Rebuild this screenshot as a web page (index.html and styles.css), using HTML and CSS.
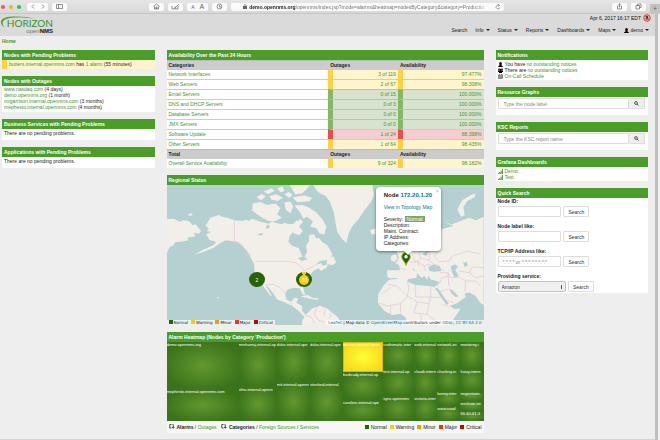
FILE: index.html
```html
<!DOCTYPE html>
<html lang="en">
<head>
<meta charset="utf-8">
<title>OpenNMS Horizon</title>
<link rel="stylesheet" href="styles.css">
</head>
<body>
<div class="browser">
  <span class="lights"><i class="light red"></i><i class="light amber"></i><i class="light lime"></i></span>
  <button class="tool wide" aria-label="Back and forward"><svg width="18" height="7" viewBox="0 0 18 7"><path d="M5 1.500L3 3.500l2 2M13 1.500l2 2-2 2"/></svg></button>
  <button class="tool side" aria-label="Sidebar"><svg width="7" height="5" viewBox="0 0 7 5"><path d="M.5.5h6v4h-6zM2.500.5v4"/></svg></button>
  <span class="space-left"></span>
  <button class="tool" aria-label="Home"><svg width="7" height="7" viewBox="0 0 7 7"><path d="M.5 3.500l3-2.500 3 2.500M1.500 3.500V6h4V3.500M3 6V4h1v2"/></svg></button>
  <button class="tool" aria-label="Notes"><svg width="9" height="7" viewBox="0 0 9 7"><path d="M1 3v3h2L8 1M4 3.500V6h3V3"/></svg></button>
  <button class="tool wide sizes" aria-label="Text size"><span>A</span><span class="big">A</span></button>
  <button class="tool" aria-label="Privacy"><svg width="7" height="7" viewBox="0 0 7 7"><circle cx="3.500" cy="3.500" r="2.500"/><path d="M3.500 2v2h2"/></svg></button>
  <div class="address">
    <svg class="lock" width="4" height="5" viewBox="0 0 4 5"><path d="M0 2h4v3H0z" fill="#666"/><path d="M1 2V1q1-1 2 0v1" fill="none" stroke="#666" stroke-width=".6"/></svg>
    <span class="url"><b>demo.opennms.org</b>/opennms/index.jsp?mode=alarms&amp;heatmap=nodesByCategory&amp;category=Productio</span>
    <svg width="6" height="6" viewBox="0 0 6 6" fill="none" stroke="#666" stroke-width=".6"><path d="M4.500 1.500a2 2 0 1 0 .5 2M3 .3l1.500 1.200L3 2.500"/></svg>
  </div>
  <span class="space-right"></span>
  <button class="tool" aria-label="Share"><svg width="7" height="7" viewBox="0 0 7 7"><path d="M2.500 3h-1v3h4V3h-1M3.500 4.500V.7M2.500 1.700l1-1 1 1"/></svg></button>
  <button class="tool" aria-label="Tabs"><svg width="7" height="7" viewBox="0 0 7 7"><path d="M1 2.500h3.500V6H1zM2.500 2.500V1H6v3.500H4.500"/></svg></button>
  <button class="newtab" aria-label="New tab">+</button>
</div>

<div class="viewport">
<div class="page">
<header class="top">
  <a class="logo" href="#">
    <svg class="swoosh" viewBox="0 0 36 12"><path d="M4.500 11.500C-2 7 0 1 12 .6 22 .2 29 1 35 3 26 1.500 19 1.300 13 1.800 3 2.500.5 6.500 4.500 11.500z" fill="#55a630"/></svg>
    <span class="name">HORIZON</span>
    <span class="sub"><i>open</i><b>NMS</b></span>
  </a>
  <div class="right">
    <div class="clock">Apr 6, 2017 16:17 EDT
      <svg width="8" height="8" viewBox="0 0 8 8"><circle cx="4" cy="4" r="3.300" fill="#dcb5a6" stroke="#ee4423" stroke-width="1"/><path d="M2.500 4.700h3l-.5-1q0-2-1-2t-1 2zM3.500 5.300h1v.7h-1z" fill="#222"/><path d="M1.700 1.700l4.600 4.600" stroke="#ee4423" stroke-width=".8"/></svg>
    </div>
    <nav class="menu">
      <a href="#">Search</a><a href="#">Info<i class="caret"></i></a><a href="#">Status<i class="caret"></i></a><a href="#">Reports<i class="caret"></i></a><a href="#">Dashboards<i class="caret"></i></a><a href="#">Maps<i class="caret"></i></a><a href="#"><svg class="user" width="5" height="5" viewBox="0 0 5 5"><path d="M0 5q0-1.300 1.800-1.700Q1 2.500 1.200 1q1.300-1.800 2.600 0Q4 2.500 3.200 3.300 5 3.700 5 5z"/></svg>demo<i class="caret"></i></a>
    </nav>
  </div>
</header>
<div class="crumb"><a href="#">Home</a></div>

<main class="columns">
<div class="col">
  <section class="card"><h2>Nodes with Pending Problems</h2>
    <p class="alarm"><a href="#">butters.internal.opennms.com</a> has <a href="#">1 alarm</a> (55 minutes)</p></section>
  <section class="card"><h2>Nodes with Outages</h2>
    <ul class="list outages"><li><a href="#">www.nasdaq.com</a> (4 days)</li><li><a href="#">demo.opennms.org</a> (1 month)</li><li><a href="#">mrgarrison.internal.opennms.com</a> (3 months)</li><li><a href="#">mephesto.internal.opennms.com</a> (4 months)</li></ul></section>
  <section class="card"><h2>Business Services with Pending Problems</h2><p class="note">There are no pending problems.</p></section>
  <section class="card"><h2>Applications with Pending Problems</h2><p class="note">There are no pending problems.</p></section>
</div>

<div class="col center">
  <section class="card"><h2>Availability Over the Past 24 Hours</h2>
    <table class="avail">
      <colgroup><col class="c1"><col class="c2"><col class="c3"></colgroup>
      <tr><th>Categories</th><th>Outages</th><th>Availability</th></tr>
      <tr class="warn"><td><a href="#">Network Interfaces</a></td><td>3 of 119</td><td>97.477%</td></tr>
      <tr class="warn"><td><a href="#">Web Servers</a></td><td>2 of 67</td><td>98.308%</td></tr>
      <tr class="ok"><td><a href="#">Email Servers</a></td><td>0 of 15</td><td>100.000%</td></tr>
      <tr class="ok"><td><a href="#">DNS and DHCP Servers</a></td><td>0 of 3</td><td>100.000%</td></tr>
      <tr class="ok"><td><a href="#">Database Servers</a></td><td>0 of 0</td><td>100.000%</td></tr>
      <tr class="ok"><td><a href="#">JMX Servers</a></td><td>0 of 0</td><td>100.000%</td></tr>
      <tr class="bad"><td><a href="#">Software Update</a></td><td>1 of 24</td><td>88.398%</td></tr>
      <tr class="warn"><td><a href="#">Other Servers</a></td><td>1 of 64</td><td>98.435%</td></tr>
      <tr><th>Total</th><th>Outages</th><th>Availability</th></tr>
      <tr class="warn"><td><a href="#">Overall Service Availability</a></td><td>9 of 324</td><td>98.182%</td></tr>
    </table></section>

  <section class="card"><h2>Regional Status</h2>
    <div class="map">
      <svg class="world" viewBox="20 42 950 420" preserveAspectRatio="xMidYMid slice">
        <g fill="#f2efe9">
          <path d="M20 145L40 143 58 152 68 148 85 150 98 163 105 160 122 180 116 188 100 185 105 196 80 200 85 208 60 212 45 214 38 224 28 228 20 245z"/>
          <path d="M82 130l12-3 3 5-10 3z"/>
          <path d="M140 158L150 140 175 132 185 137 200 140 222 148 245 150 258 146 265 150 275 143 300 152 325 158 335 150 345 156 365 160 372 155 385 160 400 158 408 148 415 150 418 143 428 152 420 162 412 172 400 180 387 196 384 212 395 224 415 232 425 256 433 258 440 240 436 225 446 210 446 192 460 190 468 203 475 200 484 212 500 222 516 250 508 262 495 268 478 270 465 282 482 276 486 284 503 280 498 290 480 300 475 292 458 300 450 312 444 330 432 340 428 348 434 372 426 370 418 352 400 350 380 356 374 370 378 385 392 392 403 380 413 382 408 395 425 405 425 420 438 433 432 438 415 420 395 405 375 395 350 385 342 372 325 350 313 338 334 374 330 374 308 345 292 330 283 310 281 280 270 258 255 235 235 215 215 210 195 208 180 218 188 210 160 230 130 242 102 252 125 238 160 222 168 212 147 207 138 190 152 182 138 180 146 175 135 162z"/>
          <path d="M425 450L435 432 455 412 478 404 500 412 532 438 545 466 425 466zM277 98L300 93 320 102 345 98 360 112 350 130 364 140 345 150 325 150 308 142 290 130 275 118zM288 78l16-9 12 8-14 11zM310 62l24-10 8 8-20 10zM327 76l20-6 20 10-15 10-20-4zM350 52l16-6 6 14-12 4zM372 70l12-7 12 8-10 10zM372 95l18-3 8 15-8 20-15-12zM388 42h60l-10 14-14 12-20 2-7-12zM396 80l35-7 24 8-8 10-36 3zM402 104l24-2 18 7 22 14 20 22 12 22-7 24-14-4-10-16-18-4 8-16-18-14-10 6-10-18zM395 170l20-3 12 12-10 14-18-6zM420 376l22-4 14 8 18 2-2 5-26-5zM168 380l6-2 2 4z"/>
          <path d="M458 42H635L640 72 632 92 610 120 594 145 577 163 564 188 558 216 545 205 530 182 525 155 520 125 508 92 495 75 480 68 470 60zM500 262l18-6 9 18-10 8-18-2zM628 178l17-6v18h-12z"/>
          <path d="M680 298L718 298 715 282 703 275 722 270 735 258 750 248 755 235 785 242 810 236 835 232 841 175 860 170 878 164 855 150 868 162 900 150 925 140 945 148 969 138V402L958 394 945 375 925 364 912 368 915 378 890 396 868 404 880 414 900 412 882 440 862 466H738L736 440 720 428 696 432 672 420 652 396 653 370 670 342 686 326 710 324 718 308 742 296 752 292 770 306 767 322 742 324 745 334 765 342 800 344 822 348 836 334 810 325 800 310 786 318 778 308 760 292 740 300 728 308 715 320 690 322 680 318z"/>
          <path d="M692 254l14-5 5 14-10 10-10-5zM705 232l12-4 13 20 9 16-14 9-18 2 8-14z"/>
          <path d="M896 128L890 115 905 88 930 72 944 68 943 78 920 90 908 108 912 132 902 138z"/>
        </g>
        <g fill="#b5d0d0">
          <path d="M803 288L820 280 838 286 842 300 820 302 806 300zM870 286L885 280 892 288 884 296 894 315 882 320 874 304zM824 352L832 352 864 398 858 402 838 374zM864 352L878 360 894 376 884 378 872 366zM908 275l10-3 3 12-9 4zM740 326l38-8 10 10 12-12 8 12 26 4-10 13-54-3-26-8z"/>
          <path d="M785 250l15-12 28-2-26 8-4 12zM412 262l16-6 14 8-18 6zM320 160l10 8-14 6zM290 190l20-5-8 10z"/>
        </g>
        <g fill="#f2efe9"><path d="M758 290l8 0 22 24-3 8-18-17zM790 295l14 14-4 18-8-12z"/></g>
        <g fill="none" stroke="#ddb5d2" stroke-width="1.500">
          <path d="M222 148V210L238 216 262 242 272 255M285 271H385L405 275 425 290 430 300 455 288 462 282M318 342l22-2 22 12 15 20M390 395l5 10M432 432l20 5 10 20M470 408l-8 20 12 20 18 5M495 415l-5 20M512 425l-5 18"/>
          <path d="M683 340L710 345 740 375 720 398M740 328L745 352 740 375M765 342V378H810V345M690 350L660 370M720 398L680 405 656 396M720 398L720 425M740 375L770 392 760 425M770 392L805 398 810 378 845 380M805 398L800 430 825 450M760 425L800 430M690 405V430M780 430L785 460M845 385l35 10M820 350l15 12 28-8M832 362l-8-8M845 400l20 8"/>
          <path d="M715 290L735 296M740 265L755 275 770 270 775 285M755 250L765 275M775 240L780 262 805 268 820 280M780 262L770 272 790 284 812 280M790 284L795 300M805 268L808 245M835 238L820 255 835 272 865 270 875 255 920 240 960 250M838 305H862L865 345M862 305L870 320 895 318 915 330 912 362M850 300L840 292M895 300L925 305 945 320 969 315M915 330L945 330 960 345M925 305L935 288 969 290M842 325L830 345M862 315L842 322"/>
        </g>
      </svg>
      <span class="cluster west">2</span>
      <span class="cluster east"><b>30</b></span>
      <svg class="pin" viewBox="0 0 10 14"><path d="M5 13.500C4 9.500.7 8 .7 4.800a4.300 4.300 0 0 1 8.600 0C9.300 8 6 9.500 5 13.500z" fill="#276300" stroke="#a5bf22" stroke-width=".8"/><circle cx="5" cy="4.700" r="1.700" fill="#fff"/></svg>
      <div class="popup">
        <button class="close" aria-label="Close">×</button>
        <h3>Node <a href="#">172.20.1.20</a></h3>
        <p><a href="#">View in Topology Map</a></p>
        <div>Severity: <span class="badge">Normal</span></div>
        <div>Description:</div><div>Maint. Contract:</div><div>IP Address:</div><div>Categories:</div>
      </div>
      <div class="legend onmap"><span class="n">Normal</span><span class="w">Warning</span><span class="m">Minor</span><span class="j">Major</span><span class="c">Critical</span></div>
      <div class="credit"><a href="#">Leaflet</a> | Map data © <a href="#">OpenStreetMap</a> contributors under <a href="#">ODbL</a>, <a href="#">CC BY-SA 2.0</a></div>
    </div></section>

  <section class="card"><h2>Alarm Heatmap (Nodes by Category 'Production')</h2>
    <div class="heat">
      <div class="stack s72"><div class="t f47">demo.opennms.org</div><div class="t f32">mephesto.internal.opennms.com</div></div>
      <div class="stack s38"><div class="t f45">minhamaj.internal.op</div><div class="t f34">ohiu.internal.openn</div></div>
      <div class="stack s66">
        <div class="line f40"><div class="t">duke.internal.ope</div><div class="t">duke.internal.ope</div></div>
        <div class="line f39"><div class="t">mit.internal.openn</div><div class="t">stanford.internal</div></div></div>
      <div class="stack s40"><div class="t f30 hot">butters.internal.open</div><div class="t f28">barbrady.internal.op</div><div class="t f21">caroline.internal.ope</div></div>
      <div class="stack s31"><div class="t f27">craftsmatic.inter</div><div class="t f27">test.internal.op</div><div class="t f25">sync.opennms</div></div>
      <div class="stack s23"><div class="t f27">web.internal</div><div class="t f27">cloudi.intern</div><div class="t f25">victoria.inter</div></div>
      <div class="stack s23"><div class="t f27">network.int</div><div class="t f22">charlesy.in</div><div class="t f15">kenny.inter</div><div class="t f15">www.nasd</div></div>
      <div class="stack s23"><div class="t f27">monterey.i</div><div class="t f22">fuzzy.intern</div><div class="t f10">mrgarrison.</div><div class="t f10">erickson.int</div><div class="t f10">66-60-61-3</div></div>
    </div>
    <div class="foot">
      <div><svg class="swap" width="6" height="5" viewBox="0 0 6 5"><path d="M2.500.5H.8v3.500h1.700M3.500.7h.8V4M3.200 3l1.100 1.300L5.500 3"/></svg><b>Alarms</b> / <a href="#">Outages</a> <svg class="swap second" width="6" height="5" viewBox="0 0 6 5"><path d="M2.500.5H.8v3.500h1.700M3.500.7h.8V4M3.200 3l1.100 1.300L5.500 3"/></svg><b>Categories</b> / <a href="#">Foreign Sources</a> / <a href="#">Services</a></div>
      <div class="legend"><span class="n">Normal</span><span class="w">Warning</span><span class="m">Minor</span><span class="j">Major</span><span class="c">Critical</span></div>
    </div></section>
</div>

<div class="col">
  <section class="card"><h2>Notifications</h2>
    <ul class="list icons">
      <li><svg width="5" height="5" viewBox="0 0 5 5"><path d="M0 5q0-1.300 1.800-1.700Q1 2.500 1.200 1q1.300-1.800 2.600 0Q4 2.500 3.200 3.300 5 3.700 5 5z"/></svg><span>You have <a href="#">no outstanding notices</a></span></li>
      <li><svg width="5" height="5" viewBox="0 0 5 5"><circle cx="1" cy="1.300" r=".9"/><circle cx="4" cy="1.300" r=".9"/><circle cx="2.500" cy="1.800" r="1.100"/><path d="M0 2.400h5v1.600H0zM1 3h3v2H1z"/></svg><span>There are <a href="#">no outstanding notices</a></span></li>
      <li><svg width="5" height="5" viewBox="0 0 5 5"><path d="M.4 1h4.200v3.600H.4zM.4 1.800h4.200M.4 3.200h4.200M1.800 1.800v2.800M3.200 1.800v2.800M1.400 0v1M3.600 0v1" fill="none" stroke="#333" stroke-width=".5"/></svg><a href="#">On-Call Schedule</a></li>
    </ul></section>
  <section class="card"><h2><a href="#">Resource Graphs</a></h2>
    <form class="group"><input aria-label="Node label" placeholder="Type the node label"><button type="button" aria-label="Find node"><svg width="5" height="5" viewBox="0 0 5 5"><circle cx="2" cy="2" r="1.400"/><path d="M3 3l1.600 1.600"/></svg></button></form></section>
  <section class="card"><h2><a href="#">KSC Reports</a></h2>
    <form class="group"><input aria-label="KSC report name" placeholder="Type the KSC report name"><button type="button" aria-label="Find report"><svg width="5" height="5" viewBox="0 0 5 5"><circle cx="2" cy="2" r="1.400"/><path d="M3 3l1.600 1.600"/></svg></button></form></section>
  <section class="card"><h2>Grafana Dashboards</h2>
    <ul class="list icons bars">
      <li><svg width="5" height="5" viewBox="0 0 5 5"><path d="M0 4h1v1H0zM1.300 3h1v2h-1zM2.600 1.700h1V5h-1zM3.900 0h1v5h-1z"/></svg><a href="#">Demo</a></li>
      <li><svg width="5" height="5" viewBox="0 0 5 5"><path d="M0 4h1v1H0zM1.300 3h1v2h-1zM2.600 1.700h1V5h-1zM3.900 0h1v5h-1z"/></svg><a href="#">Test</a></li>
    </ul></section>
  <section class="card"><h2>Quick Search</h2>
    <form class="quick">
      <label for="nid">Node ID:</label><div class="field"><input id="nid"><button type="button">Search</button></div>
      <label for="nlabel">Node label like:</label><div class="field"><input id="nlabel"><button type="button">Search</button></div>
      <label for="ip">TCP/IP Address like:</label><div class="field"><input id="ip" placeholder="*.*.*.* or *:*:*:*:*:*:*:*"><button type="button">Search</button></div>
      <label for="svc">Providing service:</label><div class="field"><select id="svc"><option>Amazon</option></select><button type="button">Search</button></div>
    </form></section>
</div>
</main>
</div>
<div class="scroll"><i></i></div>
</div>
</body>
</html>
```
FILE: styles.css
```css
* { box-sizing: border-box; }
body { margin: 0; background: #eee; color: #222; font: 5px/6px "Liberation Sans", Arial, sans-serif; min-height: 100vh; display: flex; flex-direction: column; }
a { color: #45962a; text-decoration: none; }
h2, h3, p, ul { margin: 0; padding: 0; }
ul { list-style: none; }
button, input, select { font: inherit; color: #333; margin: 0; padding: 0; border: 1px solid #ddd; background: #fff; border-radius: 1px; min-width: 0; }
svg { flex: none; }

.browser { height: 14px; display: flex; align-items: center; gap: 4px; background: linear-gradient(#e6e6e6, #d8d8d8); border-bottom: 1px solid #c6c6c6; }
.lights { display: flex; gap: 4px; padding: 0 2px 0 1px; }
.light { width: 4px; height: 4px; border-radius: 50%; }
.red { background: #f4574e; }
.amber { background: #f6b32d; }
.lime { background: #2fc23d; }
.tool { width: 15px; height: 8px; border: 0; border-radius: 2px; background: #fafafa; display: flex; align-items: center; justify-content: center; }
.tool svg { fill: none; stroke: #666; stroke-width: .7; }
.wide { width: 21px; }
.sizes { gap: 5px; color: #666; }
.big { font-size: 7px; }
.space-left { flex: 78; }
.space-right { flex: 105; }
.address { flex: 271; min-width: 0; height: 8px; display: flex; align-items: center; gap: 2px; padding: 0 3px 0 12px; background: #fafafa; border-radius: 2px; }
.url { flex: 1; overflow: hidden; white-space: nowrap; color: #777; mask-image: linear-gradient(to right, #000 92%, transparent); }
.url b { color: #222; }
.newtab { align-self: flex-end; width: 10px; height: 9px; border: 0; border-radius: 0; background: #c2c2c2; color: #666; font-size: 7px; line-height: 8px; }

.viewport { flex: 1; display: flex; }
.page { flex: 1; min-width: 0; border-bottom: 1px solid #d5d5d5; }
.scroll { width: 5px; background: #f2f2f2; }
.scroll i { display: block; width: 3px; height: 100%; background: #bfbfbf; }
.top { background: #dadada; height: 22px; display: flex; justify-content: space-between; }
.logo { position: relative; width: 53px; padding: 4px 0 0 6px; display: flex; flex-direction: column; align-items: flex-end; }
.swoosh { position: absolute; left: 0; top: 2px; width: 36px; height: 12px; }
.name { font: 10px/11px Lato, sans-serif; color: #3d8f27; position: relative; }
.sub { font-size: 6px; line-height: 4px; color: #777; }
.sub i { font-style: normal; }
.sub b { color: #111; }
.right { display: flex; flex-direction: column; align-items: flex-end; }
.clock { display: flex; align-items: center; gap: 2px; height: 8px; padding-right: 4px; color: #111; }
.menu { display: flex; gap: 8px; padding: 5px 6px 0 0; }
.menu a { color: #222; display: flex; align-items: center; }
.caret { border: solid transparent; border-top-color: #222; border-width: 2px 2px 0; margin-left: 2px; }
.user { margin-right: 1px; }
.crumb { height: 14px; padding: 2px; font-weight: bold; }

.columns { display: grid; grid-template-columns: repeat(4, 1fr); gap: 12px; padding: 0 7px 5px 2px; align-items: start; }
.col { display: flex; flex-direction: column; gap: 7px; min-width: 0; }
.center { grid-column: span 2; }
.card { background: #fff; }
.card h2 { font-size: 5px; line-height: 10px; padding: 0 2px; color: #fff; background: #4a9e28; white-space: nowrap; }
.card h2 a { color: #fff; }
.alarm { line-height: 9px; padding-left: 2px; border-left: 5px solid #ffd042; background: #fff5cc; white-space: nowrap; }
.note { padding: 1px 2px 4px; }
.list { padding: 1px 2px; }
.outages { padding: 0 2px 2px; }
.icons li { display: flex; align-items: center; gap: 2px; }
.bars svg { fill: #4a9e28; }

.avail { width: 100%; table-layout: fixed; border-spacing: 0; }
.c1 { width: 51%; }
.c2 { width: 22%; }
.c3 { width: 27%; }
.avail th { line-height: 8px; padding: 0 2px; text-align: left; background: #ccc; border-top: 1px solid #bbb; }
.avail td { line-height: 9px; padding: 0 2px; border-top: 1px solid #ccc; color: #45962a; }
.avail td + td { text-align: right; border-left: 5px solid; }
.warn td + td { background: #fff5cc; border-left-color: #ffd042; }
.ok td + td { background: #d7e3cf; border-left-color: #84b866; border-top-color: #b8c7b0; }
.bad td + td { background: #f5cdd0; border-left-color: #ea4d50; }

.map { position: relative; height: 140px; background: #b5d0d0; overflow: hidden; }
.world { display: block; width: 100%; height: 100%; }
.cluster { position: absolute; top: 87px; width: 16px; height: 15px; border-radius: 50%; background: #276300; color: #fff; display: flex; align-items: center; justify-content: center; }
.west { left: 26%; }
.east { left: 41%; background: conic-gradient(#ffcc00 0 4%, #276300 4% 96%, #ffcc00 96%); }
.east b { width: 10px; height: 10px; border-radius: 50%; background: #ffcc00; font-weight: normal; line-height: 10px; text-align: center; }
.pin { position: absolute; left: 74%; top: 67px; width: 10px; height: 14px; }
.popup { position: absolute; left: 66%; top: 2px; width: 65px; height: 64px; padding: 5px 8px; background: #fff; border-radius: 4px; box-shadow: 0 1px 3px rgba(0,0,0,.5); white-space: nowrap; }
.popup::after { content: ""; position: absolute; left: 50%; top: 100%; margin-left: -4px; border: 4px solid transparent; border-top-color: #fff; border-bottom: 0; }
.popup a { color: #0078a8; }
.popup h3 { font-size: 6px; line-height: 7px; }
.popup p { padding: 5px 0 6px; }
.close { position: absolute; right: 2px; top: 2px; border: 0; background: none; color: #aaa; line-height: 5px; }
.badge { display: inline-block; padding: 0 2px; background: #7fa660; color: #fff; }
.legend { display: flex; gap: 3px; }
.legend span::before { content: ""; display: inline-block; width: 4px; height: 4px; margin-right: 2px; background: #276300; }
.legend .w::before { background: #ffcc00; }
.legend .m::before { background: #ff9900; }
.legend .j::before { background: #ff3300; }
.legend .c::before { background: #cc0000; }
.onmap, .credit { position: absolute; bottom: 0; font: 4px/5px "DejaVu Sans", sans-serif; background: rgba(255,255,255,.7); padding: 0 2px; white-space: nowrap; }
.onmap { left: 0; }
.onmap span::before { margin-right: 1px; }
.credit { right: 0; }
.credit a { color: #0078a8; }

.heat { display: flex; height: 79px; background: #2c6512; }
.stack { display: flex; flex-direction: column; min-width: 0; }
.line { display: flex; min-height: 0; }
.line .t { flex: 1; }
.t { min-width: 0; min-height: 0; overflow: hidden; white-space: nowrap; color: #fff; font-size: 4px; line-height: 5px; background: radial-gradient(closest-side, #63972f, #3a741a 110%); }
.hot { background: radial-gradient(closest-side, #ffff35, #f7d51c 120%); box-shadow: inset 0 0 0 1px #e2b500; }
.s72 { flex: 72; } .s38 { flex: 38; } .s66 { flex: 66; } .s40 { flex: 40; } .s31 { flex: 31; } .s23 { flex: 23; }
.f47 { flex: 47; } .f32 { flex: 32; } .f45 { flex: 45; } .f34 { flex: 34; } .f40 { flex: 40; } .f39 { flex: 39; }
.f30 { flex: 30; } .f28 { flex: 28; } .f21 { flex: 21; } .f27 { flex: 27; } .f25 { flex: 25; } .f22 { flex: 22; } .f15 { flex: 15; } .f10 { flex: 10; }
.foot { display: flex; justify-content: space-between; padding: 3px 2px; background: #f7f7f7; white-space: nowrap; }
.swap { fill: none; stroke: #222; stroke-width: .8; margin-right: 2px; }
.second { margin-left: 3px; }

.group { display: flex; padding: 1px 3px 6px 2px; }
.group input { flex: 1; height: 11px; padding: 0 5px; }
.group button { width: 16px; height: 11px; border-left: 0; background: #eee; display: flex; align-items: center; justify-content: center; }
.group svg { fill: none; stroke: #333; stroke-width: .8; }
::placeholder { color: #888; opacity: 1; }
.quick { padding: 0 2px 1px; display: flex; flex-direction: column; }
.quick label { font-weight: bold; }
.field { display: flex; gap: 2px; padding: 2px 0 6px; }
.field:last-child { padding-bottom: 0; }
.field input { width: 43%; height: 11px; padding: 0 4px; }
.field select { width: 46%; height: 11px; padding: 0 3px; appearance: none; border-color: #c4c4c4; border-radius: 2px; background: linear-gradient(#555, #555) right 3px center / 1px 4px no-repeat, #efefef; }
.field button { width: 26px; height: 11px; }
```
